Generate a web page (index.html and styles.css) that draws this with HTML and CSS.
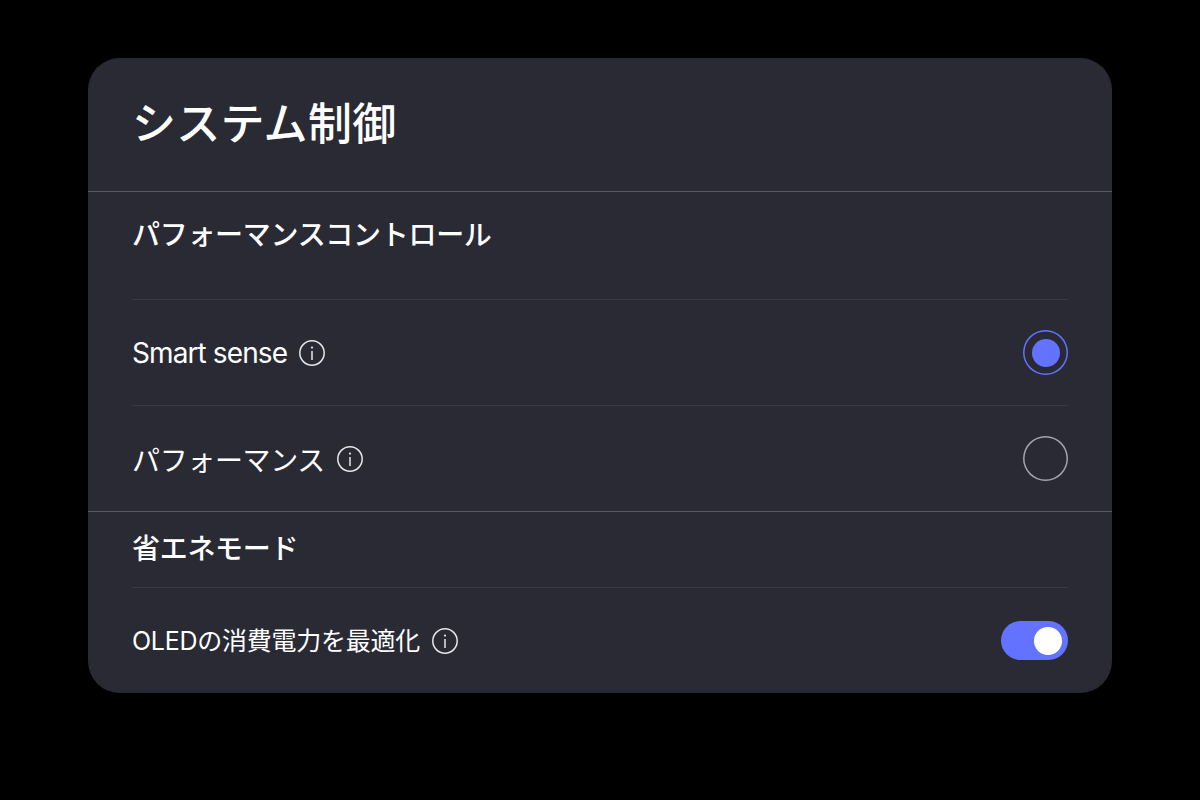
FILE: index.html
```html
<!DOCTYPE html>
<html>

<head>
    <title>システム制御</title>
    <link rel="stylesheet" href="styles.css">
</head>

<body>
    <div class="panel">
        <h1 class="panel-title">システム制御</h1>

        <div class="section section-first">
            <h2 class="section-title">パフォーマンスコントロール</h2>
            <div class="row">
                <div class="row-label row-label-latin">
                    <span>Smart sense</span>
                    <svg class="info-icon" viewBox="0 0 26 26"><circle cx="13" cy="13" r="12.2"/><circle class="info-dot" cx="13" cy="7.6" r="1.1"/><path d="M13 11v9"/></svg>
                </div>
                <span class="radio radio-on"></span>
            </div>
            <div class="row">
                <div class="row-label">
                    <span>パフォーマンス</span>
                    <svg class="info-icon" viewBox="0 0 26 26"><circle cx="13" cy="13" r="12.2"/><circle class="info-dot" cx="13" cy="7.6" r="1.1"/><path d="M13 11v9"/></svg>
                </div>
                <span class="radio"></span>
            </div>
        </div>

        <div class="section section-second">
            <h2 class="section-title">省エネモード</h2>
            <div class="row">
                <div class="row-label row-label-small">
                    <span>OLEDの消費電力を最適化</span>
                    <svg class="info-icon" viewBox="0 0 26 26"><circle cx="13" cy="13" r="12.2"/><circle class="info-dot" cx="13" cy="7.6" r="1.1"/><path d="M13 11v9"/></svg>
                </div>
                <span class="toggle"><span class="toggle-knob"></span></span>
            </div>
        </div>
    </div>
</body>

</html>
```

FILE: styles.css
```css
body {
    margin: 0;
    height: 800px;
    overflow: hidden;
    background-color: #000;
    font-family: Inter, "Noto Sans CJK JP", sans-serif;
    color: #fff;
}

.panel {
    width: 1024px;
    height: 635px;
    margin: 58px auto 0;
    background-color: #2a2a35;
    border-radius: 32px;
    overflow: hidden;
}

.panel-title {
    margin: 0;
    height: 134px;
    padding: 0 44px;
    box-sizing: border-box;
    border-bottom: 1px solid #5a5966;
    font-size: 44px;
    font-weight: 500;
    line-height: 132px;
    letter-spacing: 0.3px;
}

.section {
    padding: 0 44px;
}

.section-first {
    border-bottom: 1px solid #5a5966;
}

.section-title {
    margin: 0;
    font-size: 28px;
    font-weight: 500;
    letter-spacing: -0.3px;
    border-bottom: 1px solid #3a3a45;
}

.section-first .section-title {
    height: 108px;
    box-sizing: border-box;
    line-height: 86px;
}

.section-second .section-title {
    height: 76px;
    box-sizing: border-box;
    line-height: 74px;
}

.row {
    display: flex;
    justify-content: space-between;
    align-items: center;
    height: 106px;
    box-sizing: border-box;
    border-bottom: 1px solid #3a3a45;
}

.section .row:last-child {
    height: 105px;
    border-bottom: none;
}

.row-label {
    display: flex;
    align-items: center;
    gap: 12px;
    font-size: 28px;
    letter-spacing: -0.35px;
}

.row-label-latin {
    letter-spacing: -0.9px;
}

.row-label-small {
    font-size: 25px;
    letter-spacing: -0.25px;
}

.row-label-small span {
    padding-bottom: 4px;
}

.info-icon {
    width: 26px;
    height: 26px;
    fill: none;
    stroke: #e6e6ea;
    stroke-width: 1.5;
}

.info-dot {
    fill: #e6e6ea;
    stroke: none;
}

.radio {
    width: 45px;
    height: 45px;
    border-radius: 50%;
    box-shadow: inset 0 0 0 1.5px #a5a4ae;
    display: flex;
    align-items: center;
    justify-content: center;
}

.radio-on {
    box-shadow: inset 0 0 0 1.5px #6372ff;
}

.radio-on::after {
    content: "";
    width: 28px;
    height: 28px;
    border-radius: 50%;
    background-color: #6372ff;
}

.toggle {
    width: 67px;
    height: 39px;
    border-radius: 20px;
    background-color: #6372ff;
    display: flex;
    align-items: center;
    justify-content: flex-end;
    padding-right: 6px;
    box-sizing: border-box;
}

.toggle-knob {
    width: 28px;
    height: 28px;
    border-radius: 50%;
    background-color: #fff;
}
```
